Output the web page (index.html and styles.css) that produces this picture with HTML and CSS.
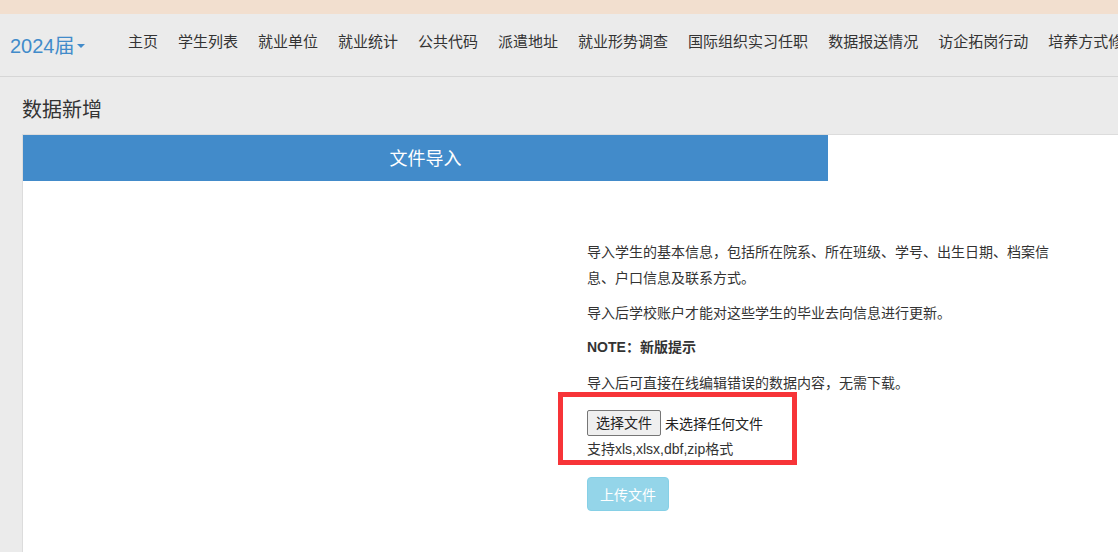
FILE: index.html
```html
<!DOCTYPE html>
<html lang="zh-CN">
<head>
<meta charset="utf-8">
<title>数据新增</title>
<link rel="stylesheet" href="styles.css">
</head>
<body>
<div class="topbar"></div>
<nav class="navbar">
  <div class="brand">2024届<span class="caret"></span></div>
  <ul class="nav">
    <li>主页</li>
    <li>学生列表</li>
    <li>就业单位</li>
    <li>就业统计</li>
    <li>公共代码</li>
    <li>派遣地址</li>
    <li>就业形势调查</li>
    <li>国际组织实习任职</li>
    <li>数据报送情况</li>
    <li>访企拓岗行动</li>
    <li>培养方式修改</li>
  </ul>
</nav>
<h1 class="page-title">数据新增</h1>
<section class="panel">
  <div class="panel-head">文件导入</div>
  <div class="panel-body">
    <div class="info">
      <p>导入学生的基本信息，包括所在院系、所在班级、学号、出生日期、档案信息、户口信息及联系方式。</p>
      <p>导入后学校账户才能对这些学生的毕业去向信息进行更新。</p>
      <p class="note">NOTE：新版提示</p>
      <p>导入后可直接在线编辑错误的数据内容，无需下载。</p>
      <div class="upload">
        <div class="file-row"><span class="file-btn">选择文件</span><span class="file-name">未选择任何文件</span></div>
        <div class="help">支持xls,xlsx,dbf,zip格式</div>
        <div class="highlight"></div>
      </div>
      <button class="btn-upload" disabled>上传文件</button>
    </div>
  </div>
</section>
</body>
</html>
```
FILE: styles.css
```css
html, body {
  margin: 0;
  padding: 0;
  background: #ebebeb;
  overflow: hidden;
  height: 552px;
}
body {
  font-family: "Liberation Sans", "Noto Sans CJK SC", sans-serif;
  color: #333;
}
.topbar {
  height: 14px;
  background: #f2dfcf;
}
.navbar {
  display: flex;
  align-items: center;
  white-space: nowrap;
  overflow: hidden;
  box-sizing: border-box;
  height: 63px;
  padding-bottom: 8px;
  border-bottom: 1px solid #d6d6d6;
}
.brand {
  flex: none;
  width: 108px;
  padding-left: 10px;
  font-size: 20px;
  color: #428bca;
  display: flex;
  align-items: center;
  margin-top: 6px;
}
.caret {
  display: inline-block;
  width: 0;
  height: 0;
  margin-left: 2px;
  margin-top: 3px;
  border-top: 4px solid #428bca;
  border-left: 4px solid transparent;
  border-right: 4px solid transparent;
}
.nav {
  display: flex;
  flex: none;
  list-style: none;
  margin: 0;
  padding: 0;
}
.nav li {
  flex: none;
  padding: 0 10px;
  font-size: 15px;
  line-height: 20px;
  color: #333;
  font-family: "Noto Sans CJK SC", sans-serif;
}
.page-title {
  margin: 0;
  padding: 20px 0 0 22px;
  height: 37px;
  font-size: 20px;
  font-weight: normal;
  line-height: 24px;
  color: #333;
  font-family: "Noto Sans CJK SC", sans-serif;
}
.panel {
  margin-left: 22px;
  background: #fff;
  border-top: 1px solid #dcdcdc;
  border-left: 1px solid #dcdcdc;
  height: 417px;
}
.panel-head {
  width: 805px;
  height: 46px;
  background: #428bca;
  color: #fff;
  font-size: 18px;
  line-height: 44px;
  text-align: center;
  font-family: "Noto Sans CJK SC", sans-serif;
}
.panel-body {
  padding: 57px 0 0 564px;
}
.info {
  width: 470px;
  font-family: "Noto Sans CJK SC", sans-serif;
  font-size: 14px;
}
.info p {
  margin: 0 0 9px;
  line-height: 26px;
}
.note {
  font-weight: bold;
  font-family: "Liberation Sans", "Noto Sans CJK SC", sans-serif;
}
.upload {
  position: relative;
  margin-top: 15px;
  font-family: "Liberation Sans", "Noto Sans CJK SC", sans-serif;
}
.file-row {
  display: flex;
  align-items: center;
  height: 26px;
  font-size: 14px;
}
.file-btn {
  display: inline-block;
  height: 26px;
  line-height: 24px;
  padding: 0 8px;
  box-sizing: border-box;
  border: 1px solid #767676;
  border-radius: 2px;
  background: #efefef;
  color: #222;
  font-size: 14px;
}
.file-name {
  margin-left: 4px;
  color: #222;
}
.help {
  margin-top: 3px;
  line-height: 20px;
  font-size: 14px;
  color: #333;
}
.highlight {
  position: absolute;
  left: -29px;
  top: -18px;
  width: 239px;
  height: 73px;
  box-sizing: border-box;
  border: 5px solid #f73438;
}
.btn-upload {
  margin-top: 18px;
  width: 82px;
  height: 34px;
  border: 1px solid #46b8da;
  border-radius: 4px;
  background: #5bc0de;
  color: #fff;
  font-size: 14px;
  font-family: "Noto Sans CJK SC", sans-serif;
  opacity: 0.65;
  padding: 0;
}
```
